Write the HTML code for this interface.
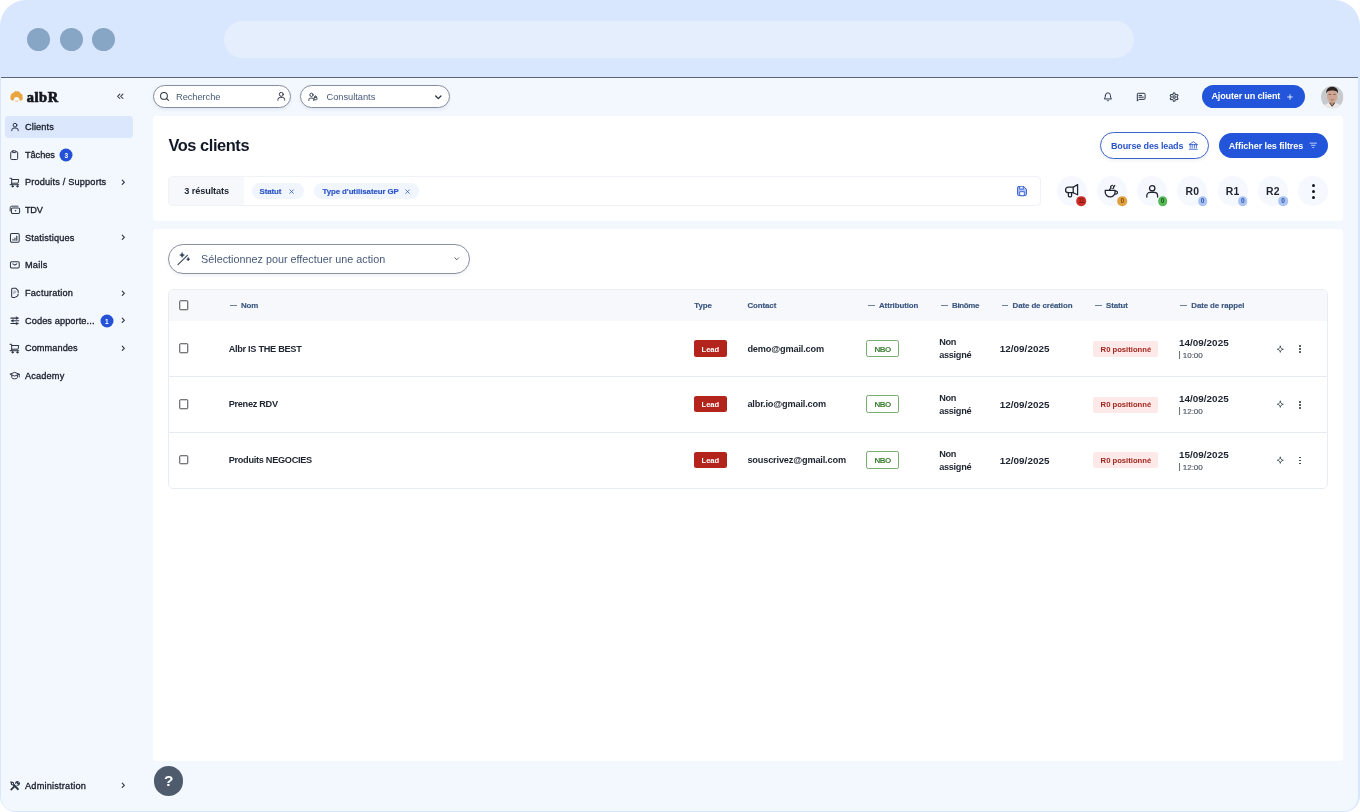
<!DOCTYPE html>
<html lang="fr">
<head>
<meta charset="utf-8">
<title>albR – Vos clients</title>
<style>
*{box-sizing:border-box;margin:0;padding:0}
html,body{width:1360px;height:812px;overflow:hidden;background:#fff}
body{font-family:"Liberation Sans",Arial,sans-serif;color:#1f2937;position:relative}
svg{display:block;overflow:visible}
.abs{position:absolute}
.frame{position:absolute;left:0;top:0;width:1359.5px;height:812px;background:#d8e7fe;border-radius:26px 26px 16px 16px;overflow:hidden}
.dot{position:absolute;top:27.5px;width:23px;height:23px;border-radius:50%;background:#87a5c4}
.urlbar{position:absolute;left:224px;top:21px;width:910.4px;height:36.8px;border-radius:19px;background:#e4eefd}
.app{position:absolute;left:1.2px;top:76.7px;width:1356.7px;height:734.1px;background:#f3f7fe;border-top:1.2px solid #56657a;border-radius:0 0 14px 14px;overflow:hidden}
.pg{position:absolute;left:-1.2px;top:-77.9px;width:1360px;height:812px;will-change:transform}
.t{position:absolute;white-space:nowrap;line-height:1;transform:translateY(-50%);margin-top:1.25px}
.nav-active{position:absolute;left:5px;top:115.7px;width:128px;height:22.5px;border-radius:4px;background:#dbe7fd}
.nav .t{left:25px;font-size:9.2px;color:#161c27;letter-spacing:.12px;-webkit-text-stroke:.3px #161c27}
.badge{position:absolute;width:13px;height:13px;border-radius:50%;background:#2352d6;color:#fff;font-size:6.5px;font-weight:700;text-align:center;line-height:13px;transform:translate(-50%,-50%)}
.pill{position:absolute;border:1px solid #858e9c;box-shadow:0 1.5px 3px rgba(90,110,150,.10);border-radius:16px;background:#fff}
.btn-blue{position:absolute;background:#2255d9;border-radius:14px}
.card{position:absolute;background:#fff;border-radius:3px}
.filterbar{position:absolute;left:168px;top:176.2px;width:873px;height:30px;border:1px solid #f0f2f7;border-radius:4px;background:#fff;overflow:hidden}
.filterbar .count{position:absolute;left:0;top:0;width:74.6px;height:100%;background:#f6f8fb}
.chip{position:absolute;height:16px;border-radius:8px;background:#f1f5fe}
.chip-t{font-size:7.85px;font-weight:700;color:#2a55c9;letter-spacing:-.06px;-webkit-text-stroke:.15px #2a55c9}
.rbtn{position:absolute;width:30px;height:30px;border-radius:50%;background:#f5f8fe;transform:translate(-50%,-50%)}
.rbtn-t{font-size:10.4px;font-weight:700;color:#1f2430;letter-spacing:.2px}
.mini{position:absolute;width:9.6px;height:9.6px;border-radius:50%;transform:translate(-50%,-50%);font-size:6.6px;font-weight:700;text-align:center;line-height:9.9px;letter-spacing:-.5px;text-indent:-.4px}
.table{position:absolute;left:168.3px;top:289.3px;width:1159.4px;height:200px;border:1px solid #e8ecf3;border-radius:5px;overflow:hidden;background:#fff}
.thead{position:absolute;left:0;top:0;width:100%;height:31px;background:#f7f8fb}
.rowline{position:absolute;left:0;width:100%;height:1px;background:#e6ebf3}
.th{font-size:7.9px;font-weight:700;color:#3b5780;letter-spacing:-.1px;-webkit-text-stroke:.15px #3b5780}
.dash{position:absolute;width:6.5px;height:1px;background:#6c809e}
.cb{position:absolute;width:9.5px;height:9.5px;border:1.15px solid #4a4a50;border-radius:1.1px;background:#fff;transform:translate(-50%,-50%)}
.td{font-size:9.2px;font-weight:700;color:#1d2430;letter-spacing:-.3px}
.lead{position:absolute;width:33px;height:16.6px;border-radius:2.2px;background:#b3251c}
.nbo{position:absolute;width:32.8px;height:17.9px;border-radius:2.2px;border:1px solid #7aad71;background:#fff}
.st{position:absolute;width:64.6px;height:16px;border-radius:2.2px;background:#fde9e8}
.time{font-size:8px;color:#4b5563;letter-spacing:-.02px;-webkit-text-stroke:.15px #4b5563}
.help{position:absolute;left:153.6px;top:766.4px;width:29.9px;height:29.9px;border-radius:50%;background:#4e5b6d}
</style>
</head>
<body>
<div class="frame">
  <div class="chrome">
    <span class="dot" style="left:26.9px"></span>
    <span class="dot" style="left:59.7px"></span>
    <span class="dot" style="left:92.2px"></span>
    <div class="urlbar"></div>
  </div>
  <div class="app"><div class="pg">

<aside class="sidebar">
<div class="logo">
<svg class="abs" style="left:9.8px;top:91.2px" width="13.2" height="10.6" viewBox="0 0 26 21"><path d="M4.500 19C1 18 -.500 14 1.200 10.800 1 7 3.500 4.500 6.500 4.200 8 1.200 11 0 13.500 1.200 16.500 -.200 19.500 1.500 20.300 4.500 23.500 5 25.500 8 24.800 11.200 26.500 14.500 24.500 18.300 21.500 19c-1.200.300-2.300-.200-3-1.200.500-2.800-1.500-5.800-5.500-5.800s-6 3-5.500 5.800c-.700 1-1.800 1.500-3 1.200z" fill="#e9a53f"/><path d="M10.500 19.800c1.600.800 3.400.800 5 0" fill="none" stroke="#e9a53f" stroke-width="1.400" stroke-linecap="round"/></svg>
<span class="t" style="left:26.7px;top:95.5px;font-family:'Liberation Serif',serif;font-weight:700;font-size:14.4px;color:#14161c;letter-spacing:.62px;-webkit-text-stroke:.7px #14161c">albR</span>
<svg class="abs" style="left:115.00px;top:90.80px;color:#2b3442" width="10.6" height="10.6" viewBox="0 0 24 24" fill="none" stroke="currentColor" stroke-width="2.3" stroke-linecap="round" stroke-linejoin="round"><path d="M11 17l-5-5 5-5"/><path d="M18 17l-5-5 5-5"/></svg>
</div>
<nav class="nav"><div class="nav-active"></div>
<svg class="abs" style="left:9.80px;top:121.90px;color:#2b3442" width="10" height="10" viewBox="0 0 24 24" fill="none" stroke="currentColor" stroke-width="2.4" stroke-linecap="round" stroke-linejoin="round"><circle cx="12" cy="7.600" r="4.500"/><path d="M4.300 21v-1.300a5.200 5.200 0 0 1 5.200-5.200h5a5.200 5.200 0 0 1 5.200 5.200V21"/></svg>
<span class="t" style="left:25px;top:126.8px;">Clients</span>
<svg class="abs" style="left:9.40px;top:149.68px;color:#2b3442" width="10.4" height="10.4" viewBox="0 0 24 24" fill="none" stroke="currentColor" stroke-width="2.3" stroke-linecap="round" stroke-linejoin="round"><rect x="8" y="2" width="8" height="4" rx="1"/><path d="M16 4h2a2 2 0 0 1 2 2v14a2 2 0 0 1-2 2H6a2 2 0 0 1-2-2V6a2 2 0 0 1 2-2h2"/></svg>
<span class="t" style="left:25px;top:154.48px;letter-spacing:-0.05px">Tâches</span>
<span class="badge" style="left:66.4px;top:154.78px">3</span>
<svg class="abs" style="left:9px;top:176.76px;color:#2b3442" width="11" height="11" viewBox="0 0 11 11" fill="none" stroke="currentColor" stroke-width="1" stroke-linecap="round" stroke-linejoin="round"><path d="M1 1.300h1.700v6.400"/><path d="M2.900 2.500h6.800l-.600 3.700H2.900"/><path d="M1.100 7.700h8.600"/><circle cx="3.600" cy="9.300" r=".700" fill="currentColor"/><circle cx="8.400" cy="9.300" r=".700" fill="currentColor"/></svg>
<span class="t" style="left:25px;top:182.16px;letter-spacing:0.17px">Produits / Supports</span>
<svg class="abs" style="left:118.50px;top:177.86px;color:#2b3442" width="8.6" height="8.6" viewBox="0 0 24 24" fill="none" stroke="currentColor" stroke-width="3.1" stroke-linecap="round" stroke-linejoin="round"><path d="M9 6l6 6-6 6"/></svg>
<svg class="abs" style="left:8.50px;top:204.04px;color:#2b3442" width="11.6" height="11.6" viewBox="0 0 24 24" fill="none" stroke="currentColor" stroke-width="2.1" stroke-linecap="round" stroke-linejoin="round"><path d="M2.500 14.500V8a3.500 3.500 0 0 1 3.500-3.500h12.500" stroke-width="1.900"/><rect x="5" y="8.200" width="17" height="11.300" rx="2.600"/><circle cx="13.500" cy="13.800" r="1.600" fill="currentColor" stroke="none"/></svg>
<span class="t" style="left:25px;top:209.84px;letter-spacing:-0.3px">TDV</span>
<svg class="abs" style="left:8.65px;top:231.57px;color:#2b3442" width="11.7" height="11.7" viewBox="0 0 24 24" fill="none" stroke="currentColor" stroke-width="2.1" stroke-linecap="round" stroke-linejoin="round"><rect x="3" y="3" width="18" height="18" rx="2.800"/><path d="M8.300 16.800v-2M12.200 16.800v-4.500M16 16.800V8.500" stroke-width="2.300"/></svg>
<span class="t" style="left:25px;top:237.52px;letter-spacing:0.17px">Statistiques</span>
<svg class="abs" style="left:118.50px;top:233.22px;color:#2b3442" width="8.6" height="8.6" viewBox="0 0 24 24" fill="none" stroke="currentColor" stroke-width="3.1" stroke-linecap="round" stroke-linejoin="round"><path d="M9 6l6 6-6 6"/></svg>
<svg class="abs" style="left:8.65px;top:259.15px;color:#2b3442" width="11.7" height="11.7" viewBox="0 0 24 24" fill="none" stroke="currentColor" stroke-width="2.1" stroke-linecap="round" stroke-linejoin="round"><rect x="3" y="5.500" width="18" height="13" rx="2.400"/><path d="M8 10l4 2.600 4-2.600"/></svg>
<span class="t" style="left:25px;top:265.2px;letter-spacing:0.2px">Mails</span>
<svg class="abs" style="left:9.00px;top:287.18px;color:#2b3442" width="11.6" height="11.6" viewBox="0 0 24 24" fill="none" stroke="currentColor" stroke-width="2.1" stroke-linecap="round" stroke-linejoin="round"><path d="M12 21.500H7.500a2 2 0 0 1-2-2v-15a2 2 0 0 1 2-2H14l5 5v4"/><path d="M10 14V8h2.500a2 2 0 0 1 0 4H10" stroke-width="1.300" opacity=".55"/><path d="M13.500 20.500c3.500-.500 5.500-2.800 5.500-6" /></svg>
<span class="t" style="left:25px;top:292.88px;letter-spacing:0.2px">Facturation</span>
<svg class="abs" style="left:118.50px;top:288.58px;color:#2b3442" width="8.6" height="8.6" viewBox="0 0 24 24" fill="none" stroke="currentColor" stroke-width="3.1" stroke-linecap="round" stroke-linejoin="round"><path d="M9 6l6 6-6 6"/></svg>
<svg class="abs" style="left:8.80px;top:314.76px;color:#2b3442" width="11.6" height="11.6" viewBox="0 0 24 24" fill="none" stroke="currentColor" stroke-width="2.2" stroke-linecap="round" stroke-linejoin="round"><path d="M4 6.500h15M5 12h15M4 17.500h15"/><path d="M15.500 3.800l3.500 2.700-3.500 2.700z" fill="currentColor" stroke-width="1"/><path d="M8.500 9.300L5 12l3.500 2.700z" fill="currentColor" stroke-width="1"/><path d="M15.500 14.800l3.500 2.700-3.500 2.700z" fill="currentColor" stroke-width="1"/></svg>
<span class="t" style="left:25px;top:320.56px;letter-spacing:0.1px">Codes apporte...</span>
<span class="badge" style="left:106.8px;top:320.56px">1</span>
<svg class="abs" style="left:118.50px;top:316.26px;color:#2b3442" width="8.6" height="8.6" viewBox="0 0 24 24" fill="none" stroke="currentColor" stroke-width="3.1" stroke-linecap="round" stroke-linejoin="round"><path d="M9 6l6 6-6 6"/></svg>
<svg class="abs" style="left:9px;top:342.84px;color:#2b3442" width="11" height="11" viewBox="0 0 11 11" fill="none" stroke="currentColor" stroke-width="1" stroke-linecap="round" stroke-linejoin="round"><path d="M1 1.300h1.700v6.400"/><path d="M2.900 2.500h6.800l-.600 3.700H2.900"/><path d="M1.100 7.700h8.600"/><circle cx="3.600" cy="9.300" r=".700" fill="currentColor"/><circle cx="8.400" cy="9.300" r=".700" fill="currentColor"/></svg>
<span class="t" style="left:25px;top:348.24px;letter-spacing:0.06px">Commandes</span>
<svg class="abs" style="left:118.50px;top:343.94px;color:#2b3442" width="8.6" height="8.6" viewBox="0 0 24 24" fill="none" stroke="currentColor" stroke-width="3.1" stroke-linecap="round" stroke-linejoin="round"><path d="M9 6l6 6-6 6"/></svg>
<svg class="abs" style="left:9.20px;top:369.82px;color:#2b3442" width="11.2" height="11.2" viewBox="0 0 24 24" fill="none" stroke="currentColor" stroke-width="2.1" stroke-linecap="round" stroke-linejoin="round"><path d="M22 9L12 5 2 9l10 4 10-4v6"/><path d="M6 10.600V16a6 3 0 0 0 12 0v-5.400"/></svg>
<span class="t" style="left:25px;top:375.92px;letter-spacing:0.16px">Academy</span>
<svg class="abs" style="left:8.90px;top:779.50px;color:#2b3442" width="11.4" height="11.4" viewBox="0 0 24 24" fill="none" stroke="currentColor" stroke-width="2.3" stroke-linecap="round" stroke-linejoin="round"><path d="M4 4l5 1.500 1 3L20 19l-1.500 1.500L8.500 10.500l-3-1z"/><path d="M14 7a4 4 0 0 1 5.500-3.500L17 6l1 1.500 1.500.500 2.300-2.300A4 4 0 0 1 17 11"/><path d="M10.500 13.500L4 20l1 1 6.500-6.500"/></svg>
<span class="t" style="left:25px;top:785.3px;letter-spacing:.2px">Administration</span>
<svg class="abs" style="left:118.50px;top:781.00px;color:#2b3442" width="8.6" height="8.6" viewBox="0 0 24 24" fill="none" stroke="currentColor" stroke-width="3.1" stroke-linecap="round" stroke-linejoin="round"><path d="M9 6l6 6-6 6"/></svg>
</nav></aside>
<header class="topbar">
<div class="pill" style="left:153px;top:85px;width:138px;height:23px"></div>
<svg class="abs" style="left:159.00px;top:91.10px;color:#2b3442" width="10.8" height="10.8" viewBox="0 0 24 24" fill="none" stroke="currentColor" stroke-width="2.3" stroke-linecap="round" stroke-linejoin="round"><circle cx="11" cy="11" r="7.500"/><path d="M21 21l-4.500-4.500"/></svg>
<span class="t" style="left:176px;top:96.7px;font-size:9.3px;color:#465a78;letter-spacing:-.06px">Recherche</span>
<svg class="abs" style="left:275.90px;top:91.30px;color:#2b3442" width="10.6" height="10.6" viewBox="0 0 24 24" fill="none" stroke="currentColor" stroke-width="2.2" stroke-linecap="round" stroke-linejoin="round"><circle cx="12" cy="7.600" r="4.500"/><path d="M4.300 21v-1.300a5.200 5.200 0 0 1 5.200-5.200h5a5.200 5.200 0 0 1 5.200 5.200V21"/></svg>
<div class="pill" style="left:300.2px;top:85px;width:149.4px;height:23px"></div>
<svg class="abs" style="left:307.70px;top:91.70px;color:#2b3442" width="9.8" height="9.8" viewBox="0 0 24 24" fill="none" stroke="currentColor" stroke-width="2.2" stroke-linecap="round" stroke-linejoin="round"><path d="M14 21v-2a4 4 0 0 0-4-4H6a4 4 0 0 0-4 4v2"/><circle cx="8.500" cy="7" r="4"/><rect x="15" y="13" width="7" height="6" rx="1.500"/><path d="M16.500 13v-1.500a2 2 0 0 1 4 0V13"/></svg>
<span class="t" style="left:326.5px;top:96.5px;font-size:9.3px;color:#465a78;letter-spacing:-.03px">Consultants</span>
<svg class="abs" style="left:433.40px;top:91.50px;color:#2b3442" width="10.6" height="10.6" viewBox="0 0 24 24" fill="none" stroke="currentColor" stroke-width="3" stroke-linecap="round" stroke-linejoin="round"><path d="M6 9l6 6 6-6"/></svg>
<svg class="abs" style="left:1103.10px;top:92.10px;color:#2b3442" width="9.8" height="9.8" viewBox="0 0 24 24" fill="none" stroke="currentColor" stroke-width="2.4" stroke-linecap="round" stroke-linejoin="round"><path d="M6 8a6 6 0 0 1 12 0c0 7 3 9 3 9H3s3-2 3-9"/><path d="M10.300 21a1.940 1.940 0 0 0 3.400 0"/></svg>
<svg class="abs" style="left:1136.20px;top:91.80px;color:#2b3442" width="10.4" height="10.4" viewBox="0 0 24 24" fill="none" stroke="currentColor" stroke-width="2.3" stroke-linecap="round" stroke-linejoin="round"><path d="M21 15a2 2 0 0 1-2 2H7l-4 4V5a2 2 0 0 1 2-2h14a2 2 0 0 1 2 2z"/><path d="M13 8H7"/><path d="M17 12H7"/></svg>
<svg class="abs" style="left:1168.50px;top:91.80px;color:#2b3442" width="10.2" height="10.2" viewBox="0 0 24 24" fill="none" stroke="currentColor" stroke-width="2.4" stroke-linecap="round" stroke-linejoin="round"><path d="M12.220 2h-.440a2 2 0 0 0-2 2v.180a2 2 0 0 1-1 1.730l-.430.250a2 2 0 0 1-2 0l-.150-.080a2 2 0 0 0-2.730.730l-.220.380a2 2 0 0 0 .730 2.730l.150.100a2 2 0 0 1 1 1.720v.510a2 2 0 0 1-1 1.740l-.150.090a2 2 0 0 0-.730 2.730l.220.380a2 2 0 0 0 2.730.730l.150-.080a2 2 0 0 1 2 0l.430.250a2 2 0 0 1 1 1.730V20a2 2 0 0 0 2 2h.440a2 2 0 0 0 2-2v-.180a2 2 0 0 1 1-1.730l.430-.250a2 2 0 0 1 2 0l.150.080a2 2 0 0 0 2.730-.730l.220-.390a2 2 0 0 0-.730-2.730l-.150-.080a2 2 0 0 1-1-1.740v-.500a2 2 0 0 1 1-1.740l.150-.090a2 2 0 0 0 .730-2.730l-.220-.380a2 2 0 0 0-2.730-.730l-.150.080a2 2 0 0 1-2 0l-.430-.250a2 2 0 0 1-1-1.730V4a2 2 0 0 0-2-2z"/><circle cx="12" cy="12" r="3"/></svg>
<div class="btn-blue" style="left:1201.6px;top:85.4px;width:103.5px;height:22.5px"></div>
<span class="t" style="left:1211.4px;top:95.5px;font-size:9.05px;font-weight:700;color:#fff;letter-spacing:-.15px">Ajouter un client</span>
<svg class="abs" style="left:1286.30px;top:93.00px;color:#fff" width="8" height="8" viewBox="0 0 24 24" fill="none" stroke="currentColor" stroke-width="2.5" stroke-linecap="round" stroke-linejoin="round"><path d="M5 12h14M12 5v14"/></svg>
<svg class="abs" style="left:1320.7px;top:85.5px" width="22.4" height="22.4" viewBox="0 0 44 44"><defs><clipPath id="av"><circle cx="22" cy="22" r="22"/></clipPath></defs><g clip-path="url(#av)"><rect width="44" height="44" fill="#c6cacd"/><path d="M4 44c2-8 8-10 12-11l6 4 6-4c4 1 10 3 12 11z" fill="#ebe9e6"/><path d="M17 30h10v5l-5 5-5-5z" fill="#b98d78"/><ellipse cx="22" cy="19.500" rx="10.500" ry="13" fill="#cfa693"/><path d="M10.500 15C9.500 6 15 1.500 22 1.500S34.500 6 33.500 15c-1.500-4-4-6-11.500-6s-10 2-11.500 6z" fill="#2a2320"/><path d="M15 16.500h5M24 16.500h5" stroke="#6d4d40" stroke-width="1.600"/><path d="M19 26.500c2 1.200 4 1.200 6 0" stroke="#8a5b4e" stroke-width="1.300" fill="none"/><path d="M17 33l5 7 5-7" stroke="#3a302b" stroke-width="1.600" fill="none"/></g></svg>
</header>
<section class="card" style="left:153px;top:115.8px;width:1190.2px;height:105px"></section>
<span class="t" style="left:168.4px;top:143.9px;font-size:16.4px;font-weight:700;color:#111827;letter-spacing:-.42px">Vos clients</span>
<div class="pill" style="left:1100px;top:132px;width:109.3px;height:27.4px;border:1.2px solid #3c62cf;border-radius:14px"></div>
<span class="t" style="left:1111px;top:144.5px;font-size:9px;font-weight:700;color:#2a55c9;letter-spacing:-.14px">Bourse des leads</span>
<svg class="abs" style="left:1188.20px;top:139.90px;color:#2a55c9" width="10.6" height="10.6" viewBox="0 0 24 24" fill="none" stroke="currentColor" stroke-width="1.8" stroke-linecap="round" stroke-linejoin="round"><path d="M3 21h18M5 10v8M9.500 10v8M14.500 10v8M19 10v8M3 10l9-6 9 6z"/></svg>
<div class="btn-blue" style="left:1218.8px;top:133.2px;width:109.6px;height:24.8px"></div>
<span class="t" style="left:1228.7px;top:144.5px;font-size:9px;font-weight:700;color:#fff;letter-spacing:-.08px">Afficher les filtres</span>
<svg class="abs" style="left:1308.70px;top:141.40px;color:#fff" width="8.6" height="8.6" viewBox="0 0 24 24" fill="none" stroke="currentColor" stroke-width="2.0" stroke-linecap="round" stroke-linejoin="round"><path d="M3 6h18M7 12h10M10.500 18h3"/></svg>
<div class="filterbar"><div class="count"></div></div>
<span class="t" style="left:184.2px;top:191px;font-size:9.2px;font-weight:700;color:#1d2430;letter-spacing:-.1px">3 résultats</span>
<div class="chip" style="left:251.8px;top:183px;width:52px"></div>
<span class="t chip-t" style="left:259.5px;top:191.1px;">Statut</span>
<svg class="abs" style="left:288.20px;top:187.90px;color:#2a55c9" width="7.2" height="7.2" viewBox="0 0 24 24" fill="none" stroke="currentColor" stroke-width="2.6" stroke-linecap="round" stroke-linejoin="round"><path d="M6 6l12 12M18 6L6 18"/></svg>
<div class="chip" style="left:314.3px;top:183px;width:105.2px"></div>
<span class="t chip-t" style="left:322.5px;top:191.1px;">Type d'utilisateur GP</span>
<svg class="abs" style="left:403.90px;top:187.90px;color:#2a55c9" width="7.2" height="7.2" viewBox="0 0 24 24" fill="none" stroke="currentColor" stroke-width="2.6" stroke-linecap="round" stroke-linejoin="round"><path d="M6 6l12 12M18 6L6 18"/></svg>
<svg class="abs" style="left:1017.4px;top:186.1px;color:#3a5fcc" width="10" height="10" viewBox="0 0 10 10" fill="none" stroke="currentColor" stroke-width="1" stroke-linecap="round" stroke-linejoin="round"><path d="M1.400.600h5.400l2.600 2.600v5.400a.800.800 0 0 1-.800.800H1.400a.800.800 0 0 1-.800-.800V1.400a.800.800 0 0 1 .800-.800z" fill="#aec3f6"/><path d="M2.700 9.400V5.700h4.600v3.700z" fill="#fff" stroke-width=".900"/><path d="M2.700.700v2.500h3.600V.700" fill="#e4ebfc" stroke-width=".900"/></svg>
<div class="rbtn" style="left:1071.6px;top:191.1px"></div>
<svg class="abs" style="left:1064px;top:183px;color:#1f2430" width="16" height="16" viewBox="0 0 16 16" fill="none" stroke="currentColor" stroke-width="1.250" stroke-linecap="round" stroke-linejoin="round"><path d="M9.200 4.200H4.300a2.750 2.750 0 0 0 0 5.500h4.900"/><path d="M9.200 4.200L13.600 1.600v10.200L9.200 9.700z"/><path d="M4.400 9.700v3a1.100 1.100 0 0 0 1.100 1.100h1a1.100 1.100 0 0 0 1.100-1.100v-3"/></svg>
<div class="rbtn" style="left:1111.8px;top:191.1px"></div>
<svg class="abs" style="left:1104px;top:184px;color:#1f2430" width="16" height="14" viewBox="0 0 16 14" fill="none" stroke="currentColor" stroke-width="1.250" stroke-linecap="round" stroke-linejoin="round"><path d="M1.200 6.400h9.900V8a4.950 4.950 0 0 1-9.900 0z"/><path d="M11.100 7h.900a1.500 1.500 0 0 1 0 3h-1.300"/><path d="M8.400 1.300C6.500 2.300 6.200 3 6.900 3.700 7.400 4.300 6.600 5 5.600 5.400"/><path d="M10.800 1.600C9.600 2.300 9.200 2.800 9.600 3.300c.300.500-.100.900-.700 1.200"/></svg>
<div class="rbtn" style="left:1152.2px;top:191.1px"></div>
<svg class="abs" style="left:1145px;top:184px;color:#1f2430" width="15" height="15" viewBox="0 0 15 15" fill="none" stroke="currentColor" stroke-width="1.300" stroke-linecap="round" stroke-linejoin="round"><circle cx="7.200" cy="4.300" r="2.700"/><path d="M1.800 13v-1.300a3.300 3.300 0 0 1 3.300-3.300h4.200a3.300 3.300 0 0 1 3.300 3.300V13"/></svg>
<div class="rbtn" style="left:1192.4px;top:191.1px"></div>
<span class="t rbtn-t" style="left:1185.6000000000001px;top:191.2px;">R0</span>
<div class="rbtn" style="left:1232.6px;top:191.1px"></div>
<span class="t rbtn-t" style="left:1225.8px;top:191.2px;">R1</span>
<div class="rbtn" style="left:1272.9px;top:191.1px"></div>
<span class="t rbtn-t" style="left:1266.1000000000001px;top:191.2px;">R2</span>
<div class="rbtn" style="left:1313.2px;top:191.1px"></div>
<div class="abs" style="left:1311.7px;top:183.8px;width:3px;height:3px;border-radius:50%;background:#14161c"></div>
<div class="abs" style="left:1311.7px;top:189.7px;width:3px;height:3px;border-radius:50%;background:#14161c"></div>
<div class="abs" style="left:1311.7px;top:195.6px;width:3px;height:3px;border-radius:50%;background:#14161c"></div>
<span class="mini" style="left:1081.4px;top:201.3px;background:#cf2f27;color:#7d150f">11</span>
<span class="mini" style="left:1122.4px;top:201.3px;background:#e3a13e;color:#7a4a0a">0</span>
<span class="mini" style="left:1162.5px;top:201.3px;background:#58b857;color:#14531a">0</span>
<span class="mini" style="left:1202.6px;top:201.3px;background:#a9c3f3;color:#2f52ad">0</span>
<span class="mini" style="left:1242.8px;top:201.3px;background:#a9c3f3;color:#2f52ad">0</span>
<span class="mini" style="left:1283px;top:201.3px;background:#a9c3f3;color:#2f52ad">0</span>
<section class="card" style="left:153px;top:228.7px;width:1190.2px;height:532px"></section>
<div class="pill" style="left:168px;top:244px;width:302px;height:30px;border-color:#8a93a1"></div>
<svg class="abs" style="left:176px;top:252px;color:#33405a" width="14" height="14" viewBox="0 0 14 14" fill="none" stroke="currentColor" stroke-width="1" stroke-linecap="round" stroke-linejoin="round"><path d="M2 12.700L11.400 3.300" stroke-width="1.050"/><path d="M6.1 0.7000000000000002Q6.70 2.50 8.5 3.1Q6.70 3.70 6.1 5.5Q5.50 3.70 3.6999999999999997 3.1Q5.50 2.50 6.1 0.7000000000000002Z" fill="currentColor" stroke-width=".400"/><path d="M12.2 5.5Q12.62 6.78 13.899999999999999 7.2Q12.62 7.62 12.2 8.9Q11.77 7.62 10.5 7.2Q11.77 6.78 12.2 5.5Z" fill="currentColor" stroke-width=".400"/></svg>
<span class="t" style="left:201.1px;top:257.5px;font-size:10.8px;color:#465a78;letter-spacing:-.0px">Sélectionnez pour effectuer une action</span>
<svg class="abs" style="left:453.25px;top:255.45px;color:#2b3442" width="7.5" height="7.5" viewBox="0 0 24 24" fill="none" stroke="currentColor" stroke-width="2.6" stroke-linecap="round" stroke-linejoin="round"><path d="M6 9l6 6 6-6"/></svg>
<div class="table"><div class="thead"></div>
<div class="rowline" style="top:85.6px"></div>
<div class="rowline" style="top:141.4px"></div>
</div>
<span class="cb" style="left:183.7px;top:305.4px"></span>
<span class="dash" style="left:230px;top:305.0px"></span>
<span class="t th" style="left:241px;top:304.4px;">Nom</span>
<span class="t th" style="left:694.3px;top:304.4px;">Type</span>
<span class="t th" style="left:747.5px;top:304.4px;">Contact</span>
<span class="dash" style="left:868px;top:305.0px"></span>
<span class="t th" style="left:879px;top:304.4px;">Attribution</span>
<span class="dash" style="left:941px;top:305.0px"></span>
<span class="t th" style="left:952px;top:304.4px;letter-spacing:-.32px">Binôme</span>
<span class="dash" style="left:1001.6px;top:305.0px"></span>
<span class="t th" style="left:1012.6px;top:304.4px;">Date de création</span>
<span class="dash" style="left:1095px;top:305.0px"></span>
<span class="t th" style="left:1106px;top:304.4px;">Statut</span>
<span class="dash" style="left:1180.3px;top:305.0px"></span>
<span class="t th" style="left:1191.3px;top:304.4px;">Date de rappel</span>
<span class="cb" style="left:183.7px;top:348.3px"></span>
<span class="t td" style="left:228.7px;top:348.3px;">Albr IS THE BEST</span>
<div class="lead" style="left:694px;top:340.0px"></div>
<span class="t" style="left:701.6px;top:348.4px;font-size:7.6px;font-weight:700;color:#fff;letter-spacing:-.1px">Lead</span>
<span class="t td" style="left:747.4px;top:348.3px;letter-spacing:-.17px">demo@gmail.com</span>
<div class="nbo" style="left:866.2px;top:339.6px"></div>
<span class="t" style="left:874.4px;top:348.4px;font-size:8px;font-weight:700;color:#3f7f35;letter-spacing:-.5px">NBO</span>
<span class="t td" style="left:939.2px;top:341.7px;">Non</span>
<span class="t td" style="left:939.2px;top:354.8px;">assigné</span>
<span class="t td" style="left:999.7px;top:348.1px;font-size:9.9px;letter-spacing:.04px">12/09/2025</span>
<div class="st" style="left:1093.4px;top:340.7px"></div>
<span class="t" style="left:1100.6px;top:348.4px;font-size:7.7px;font-weight:700;color:#a3261e;letter-spacing:-.02px">R0 positionné</span>
<span class="t td" style="left:1178.9px;top:342.1px;font-size:9.9px;letter-spacing:.04px">14/09/2025</span>
<div class="abs" style="left:1179.3px;top:350.9px;width:1px;height:8.6px;background:#6b7280"></div>
<span class="t time" style="left:1182.8px;top:355.2px;">10:00</span>
<svg class="abs" style="left:1275.70px;top:344.60px;color:#2b3442" width="8.6" height="8.6" viewBox="0 0 24 24" fill="none" stroke="currentColor" stroke-width="2.2" stroke-linecap="round" stroke-linejoin="round"><path d="M12 3.500c.600 5 3.500 7.900 8.500 8.500-5 .600-7.900 3.500-8.500 8.500-.600-5-3.500-7.900-8.500-8.500 5-.600 7.900-3.500 8.500-8.500z"/></svg>
<div class="abs" style="left:1299.1px;top:345.0px;width:1.8px;height:1.8px;border-radius:50%;background:#2b3442"></div>
<div class="abs" style="left:1299.1px;top:348.0px;width:1.8px;height:1.8px;border-radius:50%;background:#2b3442"></div>
<div class="abs" style="left:1299.1px;top:351.0px;width:1.8px;height:1.8px;border-radius:50%;background:#2b3442"></div>
<span class="cb" style="left:183.7px;top:404.1px"></span>
<span class="t td" style="left:228.7px;top:404.1px;">Prenez RDV</span>
<div class="lead" style="left:694px;top:395.8px"></div>
<span class="t" style="left:701.6px;top:404.2px;font-size:7.6px;font-weight:700;color:#fff;letter-spacing:-.1px">Lead</span>
<span class="t td" style="left:747.4px;top:404.1px;letter-spacing:-.17px">albr.io@gmail.com</span>
<div class="nbo" style="left:866.2px;top:395.4px"></div>
<span class="t" style="left:874.4px;top:404.2px;font-size:8px;font-weight:700;color:#3f7f35;letter-spacing:-.5px">NBO</span>
<span class="t td" style="left:939.2px;top:397.5px;">Non</span>
<span class="t td" style="left:939.2px;top:410.6px;">assigné</span>
<span class="t td" style="left:999.7px;top:403.9px;font-size:9.9px;letter-spacing:.04px">12/09/2025</span>
<div class="st" style="left:1093.4px;top:396.5px"></div>
<span class="t" style="left:1100.6px;top:404.2px;font-size:7.7px;font-weight:700;color:#a3261e;letter-spacing:-.02px">R0 positionné</span>
<span class="t td" style="left:1178.9px;top:397.9px;font-size:9.9px;letter-spacing:.04px">14/09/2025</span>
<div class="abs" style="left:1179.3px;top:406.7px;width:1px;height:8.6px;background:#6b7280"></div>
<span class="t time" style="left:1182.8px;top:411.0px;">12:00</span>
<svg class="abs" style="left:1275.70px;top:400.40px;color:#2b3442" width="8.6" height="8.6" viewBox="0 0 24 24" fill="none" stroke="currentColor" stroke-width="2.2" stroke-linecap="round" stroke-linejoin="round"><path d="M12 3.500c.600 5 3.500 7.900 8.500 8.500-5 .600-7.900 3.500-8.500 8.500-.600-5-3.500-7.900-8.500-8.500 5-.600 7.900-3.500 8.500-8.500z"/></svg>
<div class="abs" style="left:1299.1px;top:400.8px;width:1.8px;height:1.8px;border-radius:50%;background:#2b3442"></div>
<div class="abs" style="left:1299.1px;top:403.8px;width:1.8px;height:1.8px;border-radius:50%;background:#2b3442"></div>
<div class="abs" style="left:1299.1px;top:406.8px;width:1.8px;height:1.8px;border-radius:50%;background:#2b3442"></div>
<span class="cb" style="left:183.7px;top:459.9px"></span>
<span class="t td" style="left:228.7px;top:459.9px;">Produits NEGOCIES</span>
<div class="lead" style="left:694px;top:451.6px"></div>
<span class="t" style="left:701.6px;top:460.0px;font-size:7.6px;font-weight:700;color:#fff;letter-spacing:-.1px">Lead</span>
<span class="t td" style="left:747.4px;top:459.9px;letter-spacing:-.17px">souscrivez@gmail.com</span>
<div class="nbo" style="left:866.2px;top:451.2px"></div>
<span class="t" style="left:874.4px;top:460.0px;font-size:8px;font-weight:700;color:#3f7f35;letter-spacing:-.5px">NBO</span>
<span class="t td" style="left:939.2px;top:453.3px;">Non</span>
<span class="t td" style="left:939.2px;top:466.4px;">assigné</span>
<span class="t td" style="left:999.7px;top:459.7px;font-size:9.9px;letter-spacing:.04px">12/09/2025</span>
<div class="st" style="left:1093.4px;top:452.3px"></div>
<span class="t" style="left:1100.6px;top:460.0px;font-size:7.7px;font-weight:700;color:#a3261e;letter-spacing:-.02px">R0 positionné</span>
<span class="t td" style="left:1178.9px;top:453.7px;font-size:9.9px;letter-spacing:.04px">15/09/2025</span>
<div class="abs" style="left:1179.3px;top:462.5px;width:1px;height:8.6px;background:#6b7280"></div>
<span class="t time" style="left:1182.8px;top:466.8px;">12:00</span>
<svg class="abs" style="left:1275.70px;top:456.20px;color:#2b3442" width="8.6" height="8.6" viewBox="0 0 24 24" fill="none" stroke="currentColor" stroke-width="2.2" stroke-linecap="round" stroke-linejoin="round"><path d="M12 3.500c.600 5 3.500 7.900 8.500 8.500-5 .600-7.900 3.500-8.500 8.500-.600-5-3.500-7.900-8.500-8.500 5-.600 7.900-3.500 8.500-8.500z"/></svg>
<div class="abs" style="left:1299.1px;top:456.6px;width:1.8px;height:1.8px;border-radius:50%;background:#2b3442"></div>
<div class="abs" style="left:1299.1px;top:459.6px;width:1.8px;height:1.8px;border-radius:50%;background:#2b3442"></div>
<div class="abs" style="left:1299.1px;top:462.6px;width:1.8px;height:1.8px;border-radius:50%;background:#2b3442"></div>
<div class="help"></div>
<span class="t" style="left:164px;top:779.6px;font-size:15.4px;font-weight:700;color:#fff">?</span>

  </div></div>
</div>
</body>
</html>
